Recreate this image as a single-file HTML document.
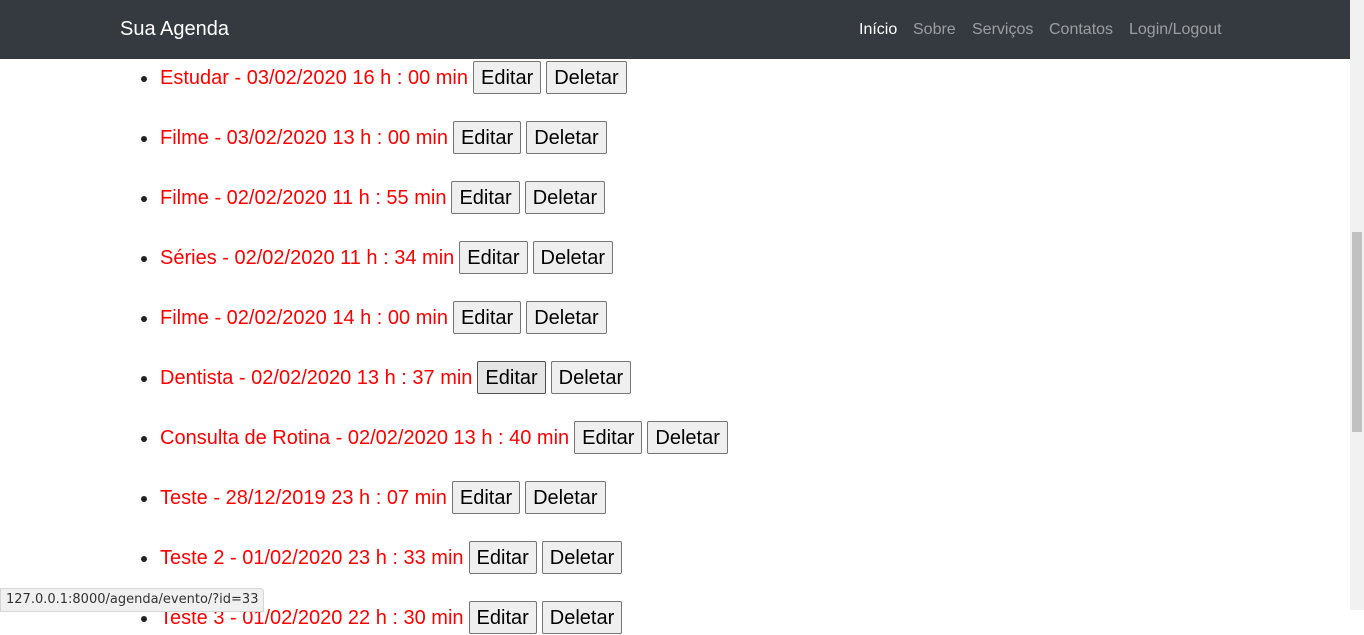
<!DOCTYPE html>
<html><head><meta charset="utf-8"><style>
html,body{margin:0;padding:0;width:1364px;height:610px;overflow:hidden;background:#fff;font-family:"Liberation Sans",sans-serif;}
nav{position:absolute;left:0;top:0;width:1350px;height:59px;background:#343a40;}
.brand{position:absolute;left:120px;top:18px;color:#fff;font-size:20px;}
.links{position:absolute;top:21px;font-size:16px;color:rgba(255,255,255,.5);}
.links span{position:absolute;white-space:nowrap;}
ul{position:absolute;left:0;top:0;margin:0;padding:0;}
li{position:absolute;left:160px;font-size:20px;color:#f00;white-space:nowrap;height:32px;line-height:34px;display:flex;}
li::before{content:"";position:absolute;left:-19px;top:15px;width:6px;height:6px;border-radius:50%;background:#222;}
button{font-family:"Liberation Sans",sans-serif;font-size:20px;height:33px;padding:2px 7px 0;margin:0 0 0 5px;background:#efefef;border:1px solid #767676;border-radius:2px;color:#000;}
button.h{background:#e5e5e5;border-color:#4f4f4f;}
.sb{position:absolute;right:0;top:0;width:14px;height:610px;background:#f1f1f1;}
.th{position:absolute;right:2px;top:232px;width:10px;height:200px;background:#c1c1c1;}
.tip{position:absolute;left:0;top:588px;height:22px;padding:0 5px;background:#f0f0f0;border:1px solid #d6d6d6;border-radius:0 4px 0 0;font-family:"DejaVu Sans",sans-serif;font-size:13px;line-height:22px;color:#333;}
</style></head><body>
<nav><div class="brand">Sua Agenda</div>
<div class="links"><span style="left:859px;color:#fff">Início</span><span style="left:913px">Sobre</span><span style="left:972px">Serviços</span><span style="left:1049px">Contatos</span><span style="left:1129px">Login/Logout</span></div></nav>
<ul>
<li style="top:61px"><span>Estudar - 03/02/2020 16 h : 00 min</span><button>Editar</button><button>Deletar</button></li>
<li style="top:121px"><span>Filme - 03/02/2020 13 h : 00 min</span><button>Editar</button><button>Deletar</button></li>
<li style="top:181px"><span>Filme - 02/02/2020 11 h : 55 min</span><button>Editar</button><button>Deletar</button></li>
<li style="top:241px"><span>Séries - 02/02/2020 11 h : 34 min</span><button>Editar</button><button>Deletar</button></li>
<li style="top:301px"><span>Filme - 02/02/2020 14 h : 00 min</span><button>Editar</button><button>Deletar</button></li>
<li style="top:361px"><span>Dentista - 02/02/2020 13 h : 37 min</span><button class="h">Editar</button><button>Deletar</button></li>
<li style="top:421px"><span>Consulta de Rotina - 02/02/2020 13 h : 40 min</span><button>Editar</button><button>Deletar</button></li>
<li style="top:481px"><span>Teste - 28/12/2019 23 h : 07 min</span><button>Editar</button><button>Deletar</button></li>
<li style="top:541px"><span>Teste 2 - 01/02/2020 23 h : 33 min</span><button>Editar</button><button>Deletar</button></li>
<li style="top:601px"><span>Teste 3 - 01/02/2020 22 h : 30 min</span><button>Editar</button><button>Deletar</button></li>
</ul>
<div class="tip">127.0.0.1:8000/agenda/evento/?id=33</div>
<div class="sb"><div class="th"></div></div>
</body></html>
